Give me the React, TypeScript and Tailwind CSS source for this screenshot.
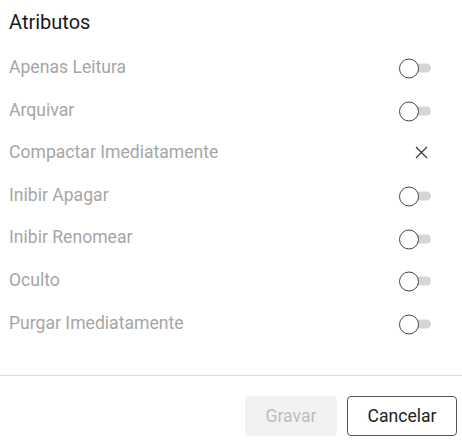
import React from "react";

type Attr = { label: string; kind: "toggle" | "x" };

const attrs: Attr[] = [
  { label: "Apenas Leitura", kind: "toggle" },
  { label: "Arquivar", kind: "toggle" },
  { label: "Compactar Imediatamente", kind: "x" },
  { label: "Inibir Apagar", kind: "toggle" },
  { label: "Inibir Renomear", kind: "toggle" },
  { label: "Oculto", kind: "toggle" },
  { label: "Purgar Imediatamente", kind: "toggle" },
];

// toggle desligado: trilho cinza com o botão branco à esquerda
function Toggle() {
  return (
    <div className="relative h-[20px] w-[32px] translate-y-[1.5px]">
      <div className="absolute right-0 top-[5px] h-[9px] w-[28px] rounded-full bg-[#d6d6d6]" />
      <div className="absolute left-0 top-0 h-[20px] w-[20px] rounded-full border border-[#444] bg-white" />
    </div>
  );
}

function CloseMark() {
  return (
    <svg width="13" height="13" viewBox="0 0 13 13" className="mr-[3px]">
      <path d="M1 1 L12 12 M12 1 L1 12" stroke="#333" strokeWidth="1.1" fill="none" />
    </svg>
  );
}

export default function App() {
  return (
    <div
      className="flex h-[440px] w-[462px] flex-col bg-white"
      style={{ fontFamily: "Roboto, 'Liberation Sans', sans-serif" }}
    >
      <div className="px-[9px] pt-[10px] text-[20px] leading-[24px] text-[#1a1a1a]">Atributos</div>
      <div className="mt-[12px] flex flex-col">
        {attrs.map((a) => (
          <div key={a.label} className="flex h-[42.6px] items-center justify-between pl-[9px] pr-[31px]">
            <span className="text-[17.6px] text-[#a6a6a6]">{a.label}</span>
            <div className="flex w-[32px] justify-end">
              {a.kind === "toggle" ? <Toggle /> : <CloseMark />}
            </div>
          </div>
        ))}
      </div>
      <div className="mt-auto border-t border-[#d9d9d9]" />
      <div className="flex justify-end gap-[10px] pl-[4px] pr-[5px] pt-[20px] pb-[4px]">
        <button className="h-[40px] w-[92px] rounded-[4px] bg-[#f2f2f2] text-[17.6px] text-[#bdbdbd]">
          Gravar
        </button>
        <button className="h-[40px] w-[110px] rounded-[4px] border border-[#555] bg-white text-[17.6px] text-[#222]">
          Cancelar
        </button>
      </div>
    </div>
  );
}
